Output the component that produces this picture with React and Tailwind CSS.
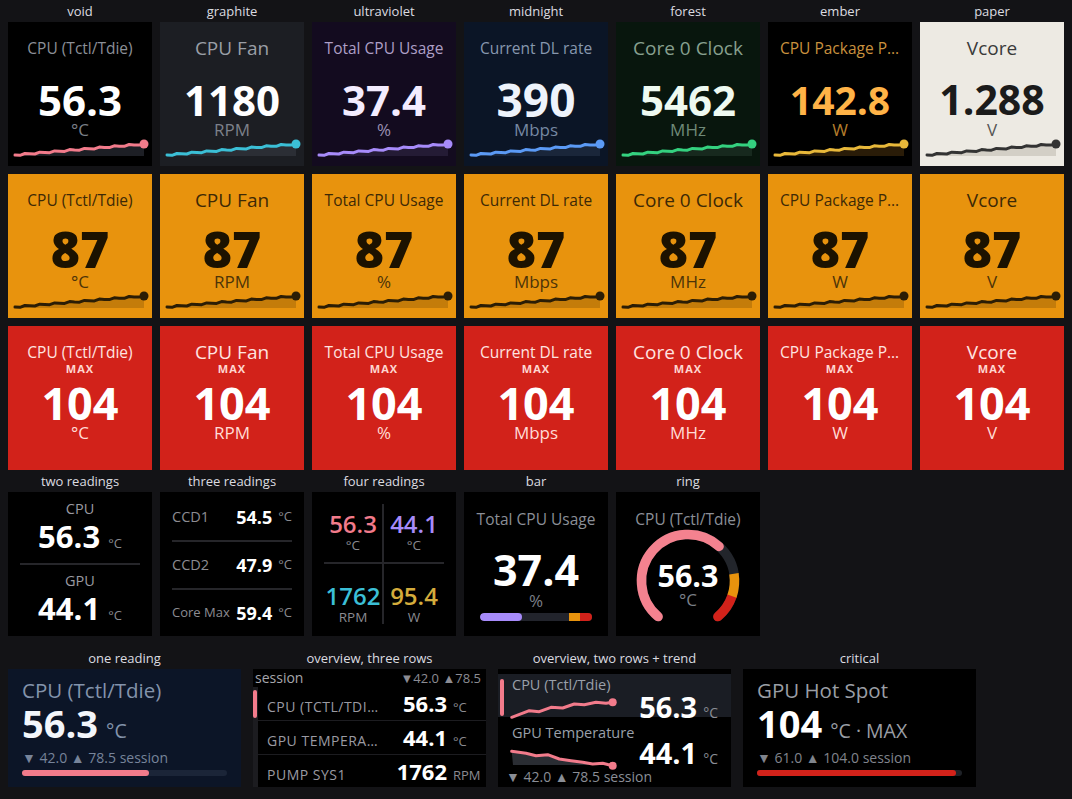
import React from 'react';

const PINK = '#f27b8b';

const THEMES = [
  { name: 'void', bg: 'bg-black', title: 'text-[#8b8f97]', value: 'text-white', unit: 'text-[#7b7f87]', line: PINK, fill: '#1d1f25' },
  { name: 'graphite', bg: 'bg-[#1c1e23]', title: 'text-[#9a9ea6]', value: 'text-white', unit: 'text-[#7d818a]', line: '#3bbfd6', fill: '#2b2e35' },
  { name: 'ultraviolet', bg: 'bg-[#130b1f]', title: 'text-[#ad9fc6]', value: 'text-[#f3ecff]', unit: 'text-[#9b8fb3]', line: '#a78bfa', fill: '#241b35' },
  { name: 'midnight', bg: 'bg-[#0b1526]', title: 'text-[#8797ae]', value: 'text-[#eef3fb]', unit: 'text-[#7688a2]', line: '#5b9af5', fill: '#1a263a' },
  { name: 'forest', bg: 'bg-[#08160d]', title: 'text-[#87a08f]', value: 'text-[#eefaf1]', unit: 'text-[#6f8a78]', line: '#34d17f', fill: '#17291e' },
  { name: 'ember', bg: 'bg-black', title: 'text-[#c9913e]', value: 'text-[#ffb347]', unit: 'text-[#b57d2c]', line: '#e8b83a', fill: '#2a1c08' },
  { name: 'paper', bg: 'bg-[#edeae3]', title: 'text-[#3a3a3a]', value: 'text-[#1b1b1b]', unit: 'text-[#555555]', line: '#333333', fill: '#d3cfc6' },
];

const WARN = { bg: 'bg-[#e8930d]', title: 'text-[#3d2906]', value: 'text-[#1c1200]', unit: 'text-[#4d3408]', line: '#2b1d05', fill: '#c47c0a' };

const SENSORS = [
  { title: 'CPU (Tctl/Tdie)', value: '56.3', unit: '°C', ts: 'text-[15.5px]', vs: 'text-[42px]' },
  { title: 'CPU Fan', value: '1180', unit: 'RPM', ts: 'text-[19px]', vs: 'text-[42px]' },
  { title: 'Total CPU Usage', value: '37.4', unit: '%', ts: 'text-[15.5px]', vs: 'text-[42px]' },
  { title: 'Current DL rate', value: '390', unit: 'Mbps', ts: 'text-[15.5px]', vs: 'text-[46px]' },
  { title: 'Core 0 Clock', value: '5462', unit: 'MHz', ts: 'text-[19px]', vs: 'text-[42px]' },
  { title: 'CPU Package Power', value: '142.8', unit: 'W', ts: 'text-[15.5px]', vs: 'text-[39px]' },
  { title: 'Vcore', value: '1.288', unit: 'V', ts: 'text-[19px]', vs: 'text-[41px]' },
];

// rising, slightly wobbly trend used by every sparkline tile
const SPARK = Array.from({ length: 27 }, (_, i) => {
  const x = 7 + (129 * i) / 26;
  const y = i === 26 ? 6 : 17 - (11 * i) / 26 + Math.sin(i * 2.1) * 0.8;
  return [x, y];
});

const toPts = (arr) => arr.map(([x, y]) => `${x.toFixed(1)},${y.toFixed(1)}`).join(' ');

function Spark({ line, fill }) {
  const pts = toPts(SPARK);
  return (
    <svg width="144" height="20" viewBox="0 0 144 20" className="block overflow-visible">
      <polygon points={`7,18 ${pts} 136,18`} fill={fill} />
      <polyline points={pts} fill="none" stroke={line} strokeWidth="3" strokeLinejoin="round" strokeLinecap="round" />
      <circle cx="136" cy="6" r="4.5" fill={line} />
    </svg>
  );
}

function Label({ children }) {
  return <div className="h-[22px] leading-[22px] text-center text-[13px] text-[#dcdce0] whitespace-nowrap">{children}</div>;
}

function SparkTile({ s, t, warn }) {
  return (
    <div className={`h-[144px] flex flex-col items-center overflow-hidden ${t.bg}`}>
      <div className={`mt-[14px] h-[24px] leading-[24px] w-full px-[12px] text-center truncate ${s.ts} ${t.title}`}>{s.title}</div>
      {warn ? (
        <div className={`mt-[14px] h-[47px] leading-[47px] text-[50px] font-extrabold ${t.value}`}>87</div>
      ) : (
        <div className={`mt-[18px] h-[43px] leading-[43px] font-bold ${s.vs} ${t.value}`}>{s.value}</div>
      )}
      <div className={`h-[17px] leading-[17px] text-[17px] ${t.unit}`}>{s.unit}</div>
      <Spark line={t.line} fill={t.fill} />
    </div>
  );
}

function MaxTile({ s }) {
  return (
    <div className="h-[144px] flex flex-col items-center overflow-hidden bg-[#d2221a]">
      <div className={`mt-[14px] h-[24px] leading-[24px] w-full px-[12px] text-center truncate text-[#ffe4e0] ${s.ts}`}>{s.title}</div>
      <div className="h-[10px] leading-[10px] text-[11px] font-bold tracking-[1px] text-[#ffd6d0]">MAX</div>
      <div className="mt-[8px] h-[42px] leading-[42px] text-[45px] font-bold text-white">104</div>
      <div className="h-[18px] leading-[18px] text-[17px] text-[#ffdcd6]">{s.unit}</div>
    </div>
  );
}

function TwoReadings() {
  const Block = ({ label, value }) => (
    <>
      <div className="h-[20px] leading-[20px] text-center text-[14.5px] text-[#9a9aa0]">{label}</div>
      <div className="h-[34px] flex items-baseline justify-center gap-[8px]">
        <span className="text-[31px] leading-[34px] font-bold text-white">{value}</span>
        <span className="text-[13px] text-[#8a8a90]">°C</span>
      </div>
    </>
  );
  return (
    <div className="h-[144px] bg-black px-[12px] pt-[7px] flex flex-col">
      <Block label="CPU" value="56.3" />
      <div className="mt-[10px] h-[2px] bg-[#26262a]" />
      <div className="mt-[6px]" />
      <Block label="GPU" value="44.1" />
    </div>
  );
}

function ThreeReadings() {
  const rows = [
    { label: 'CCD1', value: '54.5', ls: 'text-[14.5px]' },
    { label: 'CCD2', value: '47.9', ls: 'text-[14.5px]' },
    { label: 'Core Max', value: '59.4', ls: 'text-[13px]' },
  ];
  return (
    <div className="h-[144px] bg-black px-[12px] pt-[2px] flex flex-col">
      {rows.map((r, i) => (
        <React.Fragment key={r.label}>
          {i > 0 && <div className="h-[2px] bg-[#26262a]" />}
          <div className="h-[46px] flex items-center">
            <span className={`flex-1 text-[#8c8c92] ${r.ls}`}>{r.label}</span>
            <span className="text-[18px] font-bold text-white">{r.value}</span>
            <span className="ml-[6px] text-[13px] text-[#8a8a90]">°C</span>
          </div>
        </React.Fragment>
      ))}
    </div>
  );
}

function FourReadings() {
  const Cell = ({ value, unit, color, border, top }) => (
    <div className={`flex flex-col items-center ${border} ${top ? 'pt-[7px]' : 'pt-[19px]'}`}>
      <span className={`h-[25px] leading-[25px] text-[24px] font-semibold ${color}`}>{value}</span>
      <span className="h-[18px] leading-[18px] text-[13.5px] text-[#8a8a90]">{unit}</span>
    </div>
  );
  return (
    <div className="h-[144px] bg-black p-[12px] grid grid-cols-2 grid-rows-2">
      <Cell value="56.3" unit="°C" color="text-[#f27b8b]" border="border-r-2 border-b-2 border-[#26262a]" top />
      <Cell value="44.1" unit="°C" color="text-[#a78bfa]" border="border-b-2 border-[#26262a]" top />
      <Cell value="1762" unit="RPM" color="text-[#3bbfd6]" border="border-r-2 border-[#26262a]" />
      <Cell value="95.4" unit="W" color="text-[#d4ac3c]" border="" />
    </div>
  );
}

function BarTile() {
  return (
    <div className="h-[144px] bg-black flex flex-col items-center">
      <div className="mt-[15px] h-[24px] leading-[24px] text-[15.5px] text-[#8b8f97] whitespace-nowrap">Total CPU Usage</div>
      <div className="mt-[17px] h-[44px] leading-[44px] text-[43px] font-bold text-white">37.4</div>
      <div className="h-[18px] leading-[18px] text-[17px] text-[#7b7f87]">%</div>
      <div className="mt-[3px] w-[112px] h-[8px] rounded-full overflow-hidden bg-[#22242c] flex">
        <div className="w-[42px] h-full rounded-full bg-[#a78bfa]" />
        <div className="flex-1" />
        <div className="w-[11px] h-full bg-[#e8930d]" />
        <div className="w-[12px] h-full bg-[#d2221a]" />
      </div>
    </div>
  );
}

function RingTile() {
  const r = 46.5;
  const c = 55;
  const pt = (a) => {
    const t = (a * Math.PI) / 180;
    return `${(c + r * Math.sin(t)).toFixed(2)} ${(c - r * Math.cos(t)).toFixed(2)}`;
  };
  const arc = (a1, a2) => `M ${pt(a1)} A ${r} ${r} 0 ${a2 - a1 > 180 ? 1 : 0} 1 ${pt(a2)}`;
  return (
    <div className="h-[144px] bg-black flex flex-col items-center">
      <div className="mt-[15px] h-[24px] leading-[24px] text-[15.5px] text-[#8b8f97] whitespace-nowrap">CPU (Tctl/Tdie)</div>
      <div className="-mt-[5px] grid">
        <svg className="col-start-1 row-start-1" width="110" height="110" viewBox="0 0 110 110">
          <path d={arc(-140, 140)} stroke="#22252b" strokeWidth="9.5" fill="none" strokeLinecap="round" />
          <path d={arc(109, 140)} stroke="#d2221a" strokeWidth="9.5" fill="none" strokeLinecap="round" />
          <path d={arc(81, 109)} stroke="#e8930d" strokeWidth="9.5" fill="none" />
          <path d={arc(-140, 42)} stroke="#f4828f" strokeWidth="9.5" fill="none" strokeLinecap="round" />
        </svg>
        <div className="col-start-1 row-start-1 flex flex-col items-center pt-[33px]">
          <span className="h-[32px] leading-[32px] text-[30.5px] font-bold text-white">56.3</span>
          <span className="h-[18px] leading-[18px] text-[17px] text-[#7b7f87]">°C</span>
        </div>
      </div>
    </div>
  );
}

function SingleTile({ c, title, value, unit, session, pct }) {
  return (
    <div className={`h-[118px] px-[14px] flex flex-col ${c.bg}`}>
      <div className={`mt-[9px] h-[25px] leading-[25px] text-[20.5px] whitespace-nowrap ${c.title}`}>{title}</div>
      <div className="h-[41px] flex items-baseline gap-[8px]">
        <span className={`text-[38px] leading-[41px] font-bold ${c.value}`}>{value}</span>
        <span className={`text-[19.5px] ${c.unit}`}>{unit}</span>
      </div>
      <div className={`mt-[4px] h-[20px] leading-[20px] text-[14px] whitespace-nowrap ${c.sess}`}>{session}</div>
      <div className={`mt-[2px] h-[6px] rounded-full ${c.track}`}>
        <div className={`h-full rounded-full ${c.fill}`} style={{ width: `${pct}%` }} />
      </div>
    </div>
  );
}

function ThreeRowTile() {
  const rows = [
    { label: 'CPU (Tctl/Tdie)', value: '56.3', unit: '°C', h: 'h-[33px]' },
    { label: 'GPU Temperature', value: '44.1', unit: '°C', h: 'h-[33px]' },
    { label: 'Pump SYS1', value: '1762', unit: 'RPM', h: 'h-[32px]' },
  ];
  return (
    <div className="h-[118px] bg-black flex flex-col">
      <div className="h-[18px] flex items-center justify-between pl-[2px] pr-[5px]">
        <span className="text-[14px] leading-[18px] text-[#a6a6ac]">session</span>
        <span className="text-[13px] leading-[18px] text-[#8c8c93]">▼42.0 ▲78.5</span>
      </div>
      <div className="flex-1 flex bg-[#1c1c20]">
        <div className="w-[5px] flex flex-col">
          <div className="mt-[3px] h-[28px] w-[4px] rounded-full bg-[#f27b8b]" />
        </div>
        <div className="flex-1 flex flex-col gap-px">
          {rows.map((r) => (
            <div key={r.label} className={`${r.h} bg-black flex items-baseline`}>
              <span className="w-[121px] pl-[9px] truncate uppercase text-[14px] tracking-[0.5px] text-[#9a9aa2] leading-[32px]">{r.label}</span>
              <span className="flex-1 text-right text-[22px] font-bold text-white leading-[32px]">{r.value}</span>
              <span className="w-[39px] pl-[6px] text-[13px] text-[#8a8a90]">{r.unit}</span>
            </div>
          ))}
        </div>
      </div>
    </div>
  );
}

const ROW1_PTS = [[0.7, 21.3], [18.3, 14.7], [28.3, 15.7], [40, 11.3], [51.7, 12], [63.3, 8], [73.3, 8.7], [85, 6.3], [95, 7.3], [101.7, 6.3]]
  .map(([x, y]) => [x + 1, y + 2]);
const ROW2_PTS = [[0.7, 4.3], [15, 6.3], [25, 8.7], [36.7, 7.7], [48.3, 12], [60, 13.7], [71.7, 15.3], [81.7, 17], [91.7, 16.3], [101.7, 18.7]]
  .map(([x, y]) => [x + 1, y + 5]);

function TwoRowTile() {
  const p1 = toPts(ROW1_PTS);
  const p2 = toPts(ROW2_PTS);
  const e1 = ROW1_PTS[ROW1_PTS.length - 1];
  const e2 = ROW2_PTS[ROW2_PTS.length - 1];
  return (
    <div className="h-[118px] bg-black pt-[5px] flex flex-col">
      <div className="h-[43px] bg-[#1a1d24] flex">
        <div className="ml-[2px] mt-[5px] mb-[1px] w-[4px] rounded-full bg-[#f27b8b]" />
        <div className="ml-[6px] w-[104px] flex flex-col">
          <div className="mt-[2px] pl-[2px] h-[18px] leading-[18px] text-[14.5px] text-[#9aa0aa] whitespace-nowrap">CPU (Tctl/Tdie)</div>
          <svg width="104" height="23" viewBox="0 0 104 23" className="block overflow-visible">
            <polyline points={p1} fill="none" stroke={PINK} strokeWidth="3" strokeLinejoin="round" strokeLinecap="round" />
            <circle cx={e1[0]} cy={e1[1]} r="4" fill={PINK} />
          </svg>
        </div>
        <div className="flex-1 flex items-baseline justify-end gap-[6px] pr-[13px] pt-[18px]">
          <span className="text-[29px] leading-[29px] font-bold text-white">56.3</span>
          <span className="text-[14px] text-[#8a8e96]">°C</span>
        </div>
      </div>
      <div className="flex-1 flex flex-col">
        <div className="h-[50px] flex">
          <div className="ml-[12px] w-[104px] flex flex-col">
            <div className="mt-[7px] pl-[2px] h-[18px] leading-[18px] text-[14.5px] text-[#9aa0aa] whitespace-nowrap">GPU Temperature</div>
            <svg width="104" height="25" viewBox="0 0 104 25" className="block overflow-visible">
              <polygon points={`3,23 ${p2} ${e2[0]},23`} fill="#2a2d33" />
              <polyline points={p2} fill="none" stroke={PINK} strokeWidth="3" strokeLinejoin="round" strokeLinecap="round" />
              <circle cx={e2[0]} cy={e2[1]} r="4" fill={PINK} />
            </svg>
          </div>
          <div className="flex-1 flex items-baseline justify-end gap-[6px] pr-[13px] pt-[21px]">
            <span className="text-[29px] leading-[29px] font-bold text-white">44.1</span>
            <span className="text-[14px] text-[#8a8e96]">°C</span>
          </div>
        </div>
        <div className="pl-[8px] h-[20px] leading-[20px] text-[14px] text-[#8a8e96] whitespace-nowrap">▼ 42.0 ▲ 78.5 session</div>
      </div>
    </div>
  );
}

export default function App() {
  return (
    <div className="min-h-screen bg-[#131316] px-[8px] font-['Open_Sans',sans-serif] text-white">
      <div className="grid grid-cols-[repeat(7,144px)] gap-x-[8px]">
        {THEMES.map((t) => (
          <Label key={t.name}>{t.name}</Label>
        ))}
      </div>
      <div className="flex flex-col gap-[8px]">
        <div className="grid grid-cols-[repeat(7,144px)] gap-x-[8px]">
          {THEMES.map((t, i) => (
            <SparkTile key={t.name} s={SENSORS[i]} t={t} />
          ))}
        </div>
        <div className="grid grid-cols-[repeat(7,144px)] gap-x-[8px]">
          {SENSORS.map((s) => (
            <SparkTile key={s.title} s={s} t={WARN} warn />
          ))}
        </div>
        <div className="grid grid-cols-[repeat(7,144px)] gap-x-[8px]">
          {SENSORS.map((s) => (
            <MaxTile key={s.title} s={s} />
          ))}
        </div>
      </div>

      <div className="grid grid-cols-[repeat(5,144px)] gap-x-[8px]">
        <Label>two readings</Label>
        <Label>three readings</Label>
        <Label>four readings</Label>
        <Label>bar</Label>
        <Label>ring</Label>
        <TwoReadings />
        <ThreeReadings />
        <FourReadings />
        <BarTile />
        <RingTile />
      </div>

      <div className="mt-[11px] grid grid-cols-[repeat(4,233px)] gap-x-[12px]">
        <Label>one reading</Label>
        <Label>overview, three rows</Label>
        <Label>overview, two rows + trend</Label>
        <Label>critical</Label>
        <SingleTile
          c={{ bg: 'bg-[#0c1527]', title: 'text-[#8393ab]', value: 'text-[#f3f6fb]', unit: 'text-[#8393ab]', sess: 'text-[#77849a]', track: 'bg-[#1b2538]', fill: 'bg-[#f27b8b]' }}
          title="CPU (Tctl/Tdie)"
          value="56.3"
          unit="°C"
          session="▼ 42.0 ▲ 78.5 session"
          pct={62}
        />
        <ThreeRowTile />
        <TwoRowTile />
        <SingleTile
          c={{ bg: 'bg-black', title: 'text-[#9a9ea5]', value: 'text-white', unit: 'text-[#9a9ea5]', sess: 'text-[#80848c]', track: 'bg-[#1e2127]', fill: 'bg-[#d2221a]' }}
          title="GPU Hot Spot"
          value="104"
          unit="°C · MAX"
          session="▼ 61.0 ▲ 104.0 session"
          pct={97}
        />
      </div>
    </div>
  );
}
